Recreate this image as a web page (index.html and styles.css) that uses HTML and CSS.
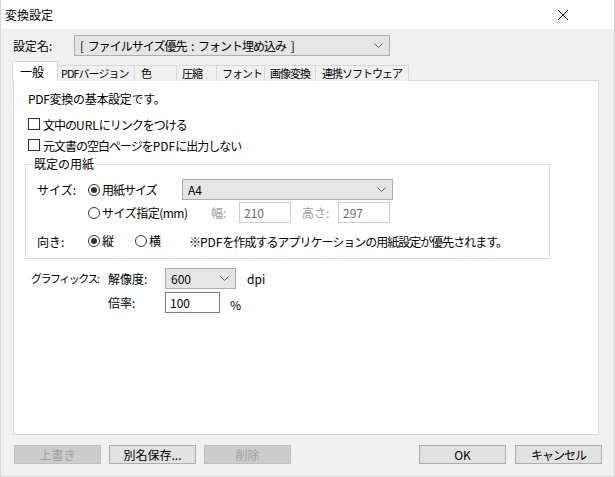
FILE: index.html
```html
<!DOCTYPE html>
<html>

<head>
    <meta charset="utf-8" />
    <title>変換設定</title>
    <link rel="stylesheet" href="styles.css">
</head>

<body>
    <div class="window">
        <div class="titlebar">
            <span class="title-text">変換設定</span>
            <svg class="close-icon" width="12" height="12" viewBox="0 0 12 12">
                <path d="M1 1 L11 11 M11 1 L1 11" stroke="#000" stroke-width="1" fill="none" />
            </svg>
        </div>
        <div class="client">
            <div class="preset-row">
                <span class="preset-label">設定名:</span>
                <div class="combo preset-combo">
                    <span class="combo-value preset-value">[ ファイルサイズ優先 : フォント埋め込み ]</span>
                    <svg class="chevron" width="9" height="5" viewBox="0 0 9 5">
                        <path d="M0.5 0.5 L4.5 4.5 L8.5 0.5" stroke="#606060" fill="none" />
                    </svg>
                </div>
            </div>

            <div class="tabs">
                <div class="tab tab-active">一般</div>
                <div class="tab tab-pdf">PDFバージョン</div>
                <div class="tab tab-color">色</div>
                <div class="tab tab-zip">圧縮</div>
                <div class="tab tab-font">フォント</div>
                <div class="tab tab-image">画像変換</div>
                <div class="tab tab-soft">連携ソフトウェア</div>
            </div>

            <div class="panel">
                <div class="desc">PDF変換の基本設定です。</div>
                <div class="check-row check-first">
                    <span class="checkbox"></span>
                    <span class="narrow">文中の<span class="latin">URL</span>にリンクをつける</span>
                </div>
                <div class="check-row">
                    <span class="checkbox"></span>
                    <span class="narrow">元文書の空白ページを<span class="latin">PDF</span>に出力しない</span>
                </div>

                <div class="group">
                    <span class="group-legend">既定の用紙</span>
                    <div class="group-row row-size">
                        <span class="row-label">サイズ:</span>
                        <span class="radio radio-checked"></span>
                        <span class="radio-text paper-text">用紙サイズ</span>
                        <div class="combo paper-combo">
                            <span class="combo-value">A4</span>
                            <svg class="chevron" width="9" height="5" viewBox="0 0 9 5">
                                <path d="M0.5 0.5 L4.5 4.5 L8.5 0.5" stroke="#606060" fill="none" />
                            </svg>
                        </div>
                    </div>
                    <div class="group-row row-custom">
                        <span class="radio"></span>
                        <span class="radio-text custom-text">サイズ指定(mm)</span>
                        <span class="disabled-label width-label">幅:</span>
                        <div class="textbox textbox-disabled">210</div>
                        <span class="disabled-label height-label">高さ:</span>
                        <div class="textbox textbox-disabled">297</div>
                    </div>
                    <div class="group-row row-orient">
                        <span class="row-label">向き:</span>
                        <span class="radio radio-checked"></span>
                        <span class="radio-text portrait-text">縦</span>
                        <span class="radio"></span>
                        <span class="radio-text landscape-text">横</span>
                        <span class="note narrow">※<span class="latin">PDF</span>を作成するアプリケーションの用紙設定が優先されます。</span>
                    </div>
                </div>

                <div class="graphics">
                    <span class="graphics-label">グラフィックス:</span>
                    <div class="graphics-fields">
                        <div class="field-row">
                            <span class="field-label">解像度:</span>
                            <div class="combo dpi-combo">
                                <span class="combo-value">600</span>
                                <svg class="chevron" width="9" height="5" viewBox="0 0 9 5">
                                    <path d="M0.5 0.5 L4.5 4.5 L8.5 0.5" stroke="#606060" fill="none" />
                                </svg>
                            </div>
                            <span class="unit">dpi</span>
                        </div>
                        <div class="field-row">
                            <span class="field-label">倍率:</span>
                            <div class="textbox scale-box">100</div>
                            <span class="unit unit-percent">%</span>
                        </div>
                    </div>
                </div>
            </div>

            <div class="buttons">
                <div class="button-group">
                    <div class="button button-disabled">上書き</div>
                    <div class="button">別名保存...</div>
                    <div class="button button-disabled">削除</div>
                </div>
                <div class="button-group">
                    <div class="button">OK</div>
                    <div class="button narrow">キャンセル</div>
                </div>
            </div>
        </div>
    </div>
</body>

</html>
```

FILE: styles.css
```css
html,
body {
    margin: 0;
    padding: 0;
    background: #ffffff;
}

body {
    font-family: "Noto Sans CJK JP", "Noto Sans", sans-serif;
    font-size: 12px;
    color: #000000;
}

/* MS UI Gothic kana are narrower than Noto's, so squeeze long runs */
.narrow {
    letter-spacing: -1px;
}

.latin {
    letter-spacing: 0;
}

.window {
    width: 615px;
    height: 477px;
    box-sizing: border-box;
    border: 1px solid #d6d6d6;
    border-top: none;
    display: flex;
    flex-direction: column;
    background: #f0f0f0;
}

.titlebar {
    height: 29px;
    background: #ffffff;
    display: flex;
    align-items: center;
    justify-content: space-between;
    padding: 0 45px 0 4px;
    flex-shrink: 0;
}

.title-text {
    line-height: 16px;
}

.client {
    flex: 1;
    padding: 6px 12px 0 12px;
    display: flex;
    flex-direction: column;
}

.preset-row {
    display: flex;
    align-items: center;
    height: 21px;
}

.preset-label {
    width: 61px;
}

.combo {
    box-sizing: border-box;
    height: 21px;
    border: 1px solid #adadad;
    background: #e5e5e5;
    display: flex;
    align-items: center;
    justify-content: space-between;
    padding: 0 6px 0 5px;
}

.combo-value {
    line-height: 16px;
    white-space: pre;
}

.preset-value {
    letter-spacing: -1px;
    word-spacing: 3px;
}

.preset-combo {
    width: 316px;
}

.tabs {
    display: flex;
    height: 20px;
    margin: 5px 0 -1px -1px;
    position: relative;
    z-index: 1;
}

.tab {
    box-sizing: border-box;
    height: 16px;
    margin-top: 4px;
    border: 1px solid #d9d9d9;
    border-bottom: none;
    border-left: none;
    background: #f0f0f0;
    font-size: 11px;
    line-height: 14px;
    padding-left: 4px;
    white-space: nowrap;
    overflow: hidden;
    letter-spacing: -1px;
}

.tab-active {
    height: 20px;
    margin-top: 0;
    background: #ffffff;
    border-left: 1px solid #d9d9d9;
    padding: 3px 0 0 7px;
    width: 46px;
    font-size: 12px;
    letter-spacing: 0;
}

.tab-pdf {
    width: 77px;
    padding-left: 3px;
}

.tab-color {
    width: 42px;
    padding-left: 6px;
}

.tab-zip {
    width: 40px;
    padding-left: 5px;
}

.tab-font {
    width: 48px;
    padding-left: 5px;
}

.tab-image {
    width: 51px;
    padding-left: 5px;
}

.tab-soft {
    width: 93px;
    padding-left: 6px;
}

.panel {
    box-sizing: border-box;
    width: 586px;
    height: 355px;
    border: 1px solid #d9d9d9;
    background: #ffffff;
    padding: 10px 0 0 14px;
    display: flex;
    flex-direction: column;
}

.desc {
    line-height: 16px;
    letter-spacing: -0.3px;
}

.check-row {
    display: flex;
    align-items: center;
    height: 16px;
    margin-top: 5px;
}

.check-first {
    margin-top: 9px;
}

.checkbox {
    box-sizing: border-box;
    width: 12px;
    height: 12px;
    border: 1px solid #333333;
    background: #ffffff;
    margin-right: 3px;
}

.group {
    position: relative;
    box-sizing: border-box;
    width: 525px;
    height: 95px;
    margin: 11px 0 0 -3px;
    border: 1px solid #dcdcdc;
    padding: 14px 0 0 11px;
}

.group-legend {
    position: absolute;
    top: -9px;
    left: 7px;
    background: #ffffff;
    padding: 0 1px;
    line-height: 16px;
}

.group-row {
    display: flex;
    align-items: center;
}

.row-size {
    height: 21px;
}

.row-custom {
    height: 21px;
    margin-top: 2px;
    padding-left: 51px;
}

.row-orient {
    height: 16px;
    margin-top: 10px;
}

.row-label {
    width: 51px;
}

.radio {
    box-sizing: border-box;
    width: 12px;
    height: 12px;
    border: 1px solid #333333;
    border-radius: 50%;
    background: #ffffff;
    display: flex;
    align-items: center;
    justify-content: center;
    margin-right: 2px;
}

.radio-checked::after {
    content: "";
    width: 6px;
    height: 6px;
    border-radius: 50%;
    background: #333333;
}

.radio-text {
    line-height: 16px;
    white-space: nowrap;
}

.paper-text {
    width: 80px;
    letter-spacing: -1px;
}

.paper-combo {
    width: 211px;
}

.custom-text {
    width: 109px;
    letter-spacing: -0.5px;
}

.disabled-label {
    color: #a0a0a0;
}

.width-label {
    width: 28px;
}

.height-label {
    width: 36px;
    margin-left: 11px;
}

.textbox {
    box-sizing: border-box;
    height: 21px;
    border: 1px solid #7a7a7a;
    background: #ffffff;
    padding: 0 4px;
    line-height: 19px;
}

.textbox-disabled {
    width: 52px;
    border-color: #cccccc;
    color: #6d6d6d;
}

.portrait-text {
    width: 33px;
}

.landscape-text {
    width: 40px;
}

.note {
    white-space: nowrap;
}

.graphics {
    display: flex;
    margin: 9px 0 0 3px;
}

.graphics-label {
    width: 77px;
    font-size: 11px;
    line-height: 16px;
    margin-top: 2px;
    white-space: nowrap;
    letter-spacing: -1.5px;
}

.graphics-fields {
    display: flex;
    flex-direction: column;
    gap: 3px;
}

.field-row {
    display: flex;
    align-items: center;
    height: 21px;
}

.field-label {
    width: 57px;
}

.dpi-combo {
    width: 71px;
}

.scale-box {
    width: 55px;
}

.unit {
    margin-left: 11px;
}

.unit-percent {
    margin-left: 10px;
    margin-top: 4px;
}

.buttons {
    display: flex;
    justify-content: space-between;
    margin: 10px 0 0 1px;
}

.button-group {
    display: flex;
    gap: 8px;
}

.button-group + .button-group {
    gap: 9px;
}

.button {
    box-sizing: border-box;
    width: 87px;
    height: 19px;
    border: 1px solid #adadad;
    background: #e1e1e1;
    text-align: center;
    line-height: 17px;
}

.button-disabled {
    background: #cccccc;
    border-color: #bfbfbf;
    color: #a0a0a0;
}
```
